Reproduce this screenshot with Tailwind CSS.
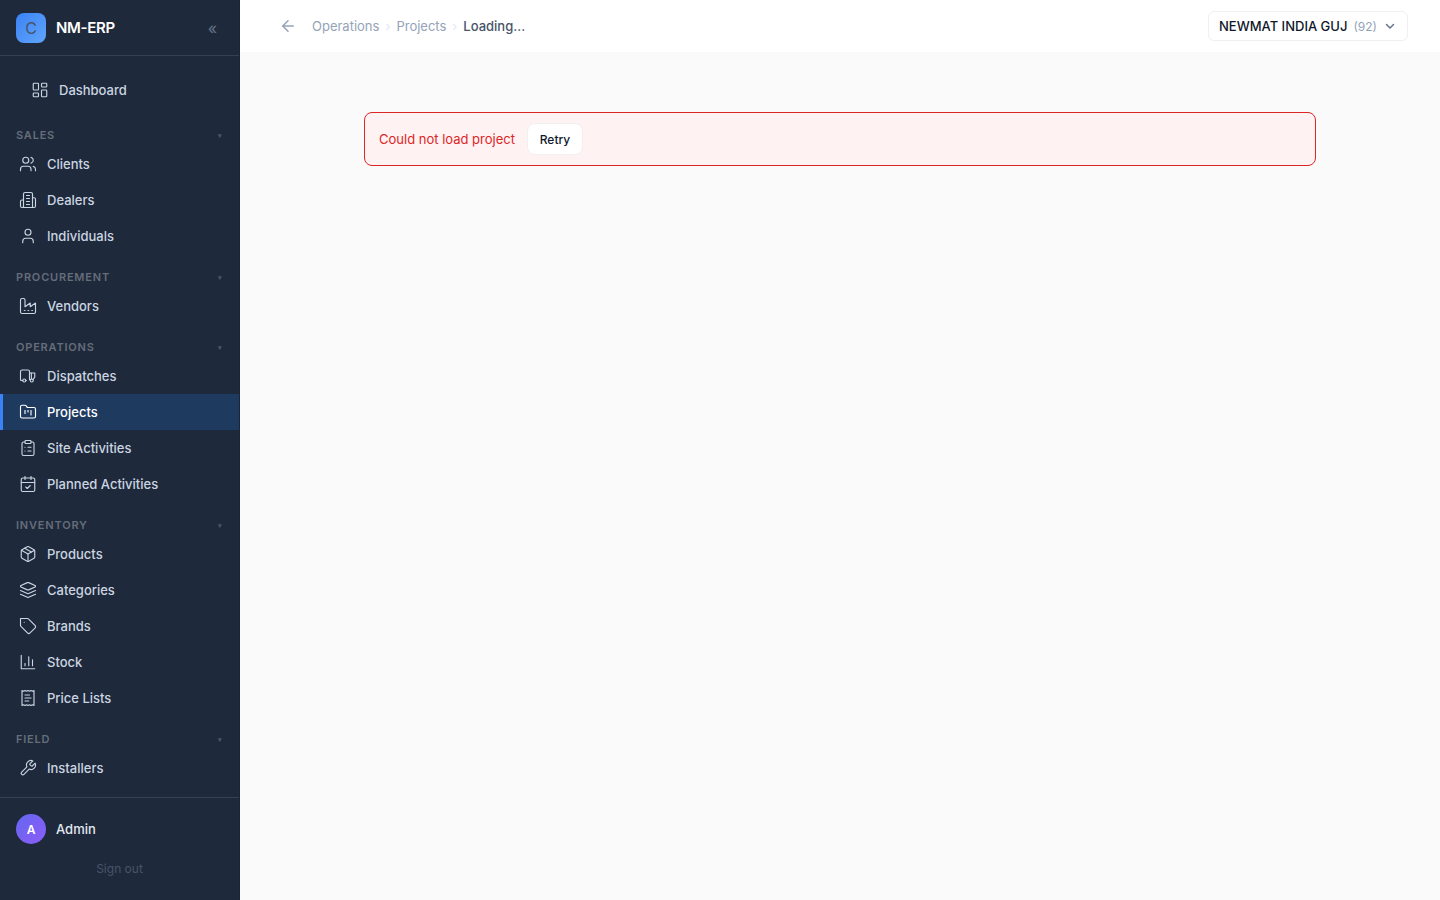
<!DOCTYPE html>
<html lang="en">
<head>
    <meta charset="UTF-8">
    <meta name="viewport" content="width=device-width, initial-scale=1.0">
    <title>NM-ERP</title>
    <script src="https://cdn.jsdelivr.net/npm/@tailwindcss/browser@4"></script>
</head>
<body class="flex h-screen overflow-hidden bg-[#fafafa] font-[Inter,sans-serif] text-[13px] leading-[20px] text-slate-900">
    <aside class="flex w-60 shrink-0 flex-col border-r border-[#1a2536] bg-[#1e293b]">
        <div class="flex h-14 shrink-0 items-center gap-2.5 border-b border-[#334155] px-4">
            <div class="flex size-[30px] items-center justify-center rounded-lg bg-linear-135 from-[#3b82f6] to-[#60a5fa] text-base text-[#475569]">C</div>
            <span class="text-[15px] leading-[22px] font-semibold tracking-[-0.3px] text-white">NM-ERP</span>
            <button class="ml-auto mr-1.5 text-base text-[#64748b]">«</button>
        </div>

        <nav id="nav" class="flex-1 overflow-hidden pt-4"></nav>

        <div class="h-[103px] shrink-0 border-t border-[#334155] px-4 pt-4">
            <div class="flex items-center gap-2.5">
                <div class="flex size-[30px] items-center justify-center rounded-full bg-linear-135 from-[#6366f1] to-[#8b5cf6] pt-px text-xs font-semibold text-white">A</div>
                <span class="font-medium text-[#e2e8f0]">Admin</span>
            </div>
            <button class="mt-4 block w-full text-center text-xs leading-[18px] text-[#475569]">Sign out</button>
        </div>
    </aside>

    <div class="flex min-w-0 flex-1 flex-col">
        <header class="flex h-[52px] shrink-0 items-center bg-white pl-[39px] pr-8">
            <svg class="size-[18px] text-[#94a3b8]" viewBox="0 0 24 24" fill="none" stroke="currentColor" stroke-width="2" stroke-linecap="round" stroke-linejoin="round"><path d="m12 19-7-7 7-7"/><path d="M19 12H5"/></svg>
            <div class="ml-[15px] flex items-center gap-1.5 text-[#94a3b8]">
                <span>Operations</span>
                <span class="text-[13px] text-[#e2e8f0]">›</span>
                <span>Projects</span>
                <span class="text-[13px] text-[#e2e8f0]">›</span>
                <span class="font-medium text-[#475569]">Loading...</span>
            </div>
            <button class="ml-auto flex h-[30px] w-[200px] items-center rounded-md border border-[#f0f0f0] bg-white px-2.5">
                <span class="font-medium">NEWMAT INDIA GUJ</span>
                <span class="ml-1.5 pt-px text-xs text-[#94a3b8]">(92)</span>
                <svg class="ml-[7px] size-3 text-[#64748b]" viewBox="0 0 24 24" fill="none" stroke="currentColor" stroke-width="3" stroke-linecap="round" stroke-linejoin="round"><path d="m5 9 7 7 7-7"/></svg>
            </button>
        </header>

        <main class="flex-1 px-[124px] pt-[60px]">
            <div class="flex h-[54px] items-center gap-3 rounded-lg border border-[#dc2626] bg-[#fef2f2] px-3.5 text-[#dc2626]">
                <span>Could not load project</span>
                <button class="h-8 w-14 rounded-lg border border-[#f0f0f0] bg-white pt-0.5 text-xs font-medium text-slate-900">Retry</button>
            </div>
        </main>
    </div>

    <script>
    // Inner markup of the 24x24 stroke icons
    const icons = {
        dashboard: '<rect width="7" height="9" x="3" y="3" rx="1"/><rect width="7" height="5" x="14" y="3" rx="1"/><rect width="7" height="9" x="14" y="12" rx="1"/><rect width="7" height="5" x="3" y="16" rx="1"/>',
        users: '<path d="M16 21v-2a4 4 0 0 0-4-4H6a4 4 0 0 0-4 4v2"/><circle cx="9" cy="7" r="4"/><path d="M22 21v-2a4 4 0 0 0-3-3.87"/><path d="M16 3.13a4 4 0 0 1 0 7.75"/>',
        building: '<path d="M6 22V4a2 2 0 0 1 2-2h8a2 2 0 0 1 2 2v18Z"/><path d="M6 12H4a2 2 0 0 0-2 2v6a2 2 0 0 0 2 2h2"/><path d="M18 9h2a2 2 0 0 1 2 2v9a2 2 0 0 1-2 2h-2"/><path d="M10 6h4"/><path d="M10 10h4"/><path d="M10 14h4"/><path d="M10 18h4"/>',
        user: '<path d="M19 21v-2a4 4 0 0 0-4-4H9a4 4 0 0 0-4 4v2"/><circle cx="12" cy="7" r="4"/>',
        factory: '<path d="M2 20a2 2 0 0 0 2 2h16a2 2 0 0 0 2-2V8l-7 5V8l-7 5V4a2 2 0 0 0-2-2H4a2 2 0 0 0-2 2Z"/><path d="M17 18h1"/><path d="M12 18h1"/><path d="M7 18h1"/>',
        truck: '<path d="M5 18H3c-.6 0-1-.4-1-1V6c0-1.1.9-2 2-2h8c1.1 0 2 .9 2 2v11"/><path d="M14 8h7v5.500l-2.500 3.500"/><path d="M16.500 8v8"/><path d="M9 18h1"/><circle cx="7" cy="18" r="2"/><circle cx="17" cy="18" r="2"/>',
        folder: '<path d="M4 20h16a2 2 0 0 0 2-2V8a2 2 0 0 0-2-2h-7.93a2 2 0 0 1-1.66-.9l-.82-1.2A2 2 0 0 0 7.93 3H4a2 2 0 0 0-2 2v13c0 1.1.9 2 2 2Z"/><path d="M8 10v4"/><path d="M12 10v2"/><path d="M16 10v6"/>',
        clipboard: '<rect width="8" height="4" x="8" y="2" rx="1"/><path d="M16 4h2a2 2 0 0 1 2 2v14a2 2 0 0 1-2 2H6a2 2 0 0 1-2-2V6a2 2 0 0 1 2-2h2"/><path d="M12 11h4"/><path d="M12 16h4"/><path d="M8 11h.01"/><path d="M8 16h.01"/>',
        calendar: '<path d="M8 2v4"/><path d="M16 2v4"/><rect width="18" height="18" x="3" y="4" rx="2"/><path d="M3 10h18"/><path d="m9 16 2 2 4-4"/>',
        box: '<path d="m7.500 4.270 9 5.150"/><path d="M21 8a2 2 0 0 0-1-1.730l-7-4a2 2 0 0 0-2 0l-7 4A2 2 0 0 0 3 8v8a2 2 0 0 0 1 1.730l7 4a2 2 0 0 0 2 0l7-4A2 2 0 0 0 21 16Z"/><path d="m3.300 7 8.700 5 8.700-5"/><path d="M12 22V12"/>',
        layers: '<path d="m12.830 2.180a2 2 0 0 0-1.660 0L2.600 6.080a1 1 0 0 0 0 1.830l8.580 3.910a2 2 0 0 0 1.660 0l8.580-3.900a1 1 0 0 0 0-1.830Z"/><path d="m22 17.650-9.170 4.160a2 2 0 0 1-1.660 0L2 17.650"/><path d="m22 12.650-9.170 4.160a2 2 0 0 1-1.660 0L2 12.650"/>',
        tag: '<path d="M12.586 2.586A2 2 0 0 0 11.172 2H2v9.172a2 2 0 0 0 .586 1.414l8.704 8.704a2.426 2.426 0 0 0 3.420 0l6.580-6.580a2.426 2.426 0 0 0 0-3.420z"/><path d="M7 7h.01"/>',
        chart: '<path d="M3 3v18h18"/><path d="M18 17V9"/><path d="M13 17V5"/><path d="M8 17v-3"/>',
        receipt: '<path d="M4 2v20l2-1 2 1 2-1 2 1 2-1 2 1 2-1 2 1V2l-2 1-2-1-2 1-2-1-2 1-2-1-2 1Z"/><path d="M14 8H8"/><path d="M16 12H8"/><path d="M13 16H8"/>',
        wrench: '<path d="M14.700 6.300a1 1 0 0 0 0 1.400l1.600 1.600a1 1 0 0 0 1.400 0l3.770-3.770a6 6 0 0 1-7.940 7.940l-6.910 6.910a2.120 2.120 0 0 1-3-3l6.910-6.910a6 6 0 0 1 7.940-7.940l-3.760 3.760z"/>',
    };

    const sections = [
        { title: 'Sales', items: [['users', 'Clients'], ['building', 'Dealers'], ['user', 'Individuals']] },
        { title: 'Procurement', items: [['factory', 'Vendors']] },
        { title: 'Operations', items: [['truck', 'Dispatches'], ['folder', 'Projects'], ['clipboard', 'Site Activities'], ['calendar', 'Planned Activities']] },
        { title: 'Inventory', items: [['box', 'Products'], ['layers', 'Categories'], ['tag', 'Brands'], ['chart', 'Stock'], ['receipt', 'Price Lists']] },
        { title: 'Field', items: [['wrench', 'Installers']] },
    ];

    function navItem(icon, label, extra) {
        const state = label === 'Projects'
            ? 'border-[#3b82f6] bg-[#1e3a5f] text-white'
            : 'border-transparent text-[#cbd5e1]';
        return `<a class="flex h-9 items-center gap-2.5 border-l-[3px] pl-4 font-medium ${state} ${extra}">
            <svg class="size-[18px]" viewBox="0 0 24 24" fill="none" stroke="currentColor" stroke-width="1.5" stroke-linecap="round" stroke-linejoin="round">${icons[icon]}</svg>
            <span>${label}</span>
        </a>`;
    }

    document.getElementById('nav').innerHTML = navItem('dashboard', 'Dashboard', 'ml-3 mb-1') + sections.map(s => `
        <div class="flex h-[34px] items-center justify-between pl-4 pr-[17px] pt-3 text-[11px] font-semibold uppercase tracking-[0.8px] text-[#656d7a]">
            <span>${s.title}</span><span class="pt-0.5 text-[7px] tracking-normal text-[#4b5563]">▾</span>
        </div>
        ${s.items.map(([icon, label]) => navItem(icon, label, '')).join('')}`).join('');
    </script>
</body>
</html>
